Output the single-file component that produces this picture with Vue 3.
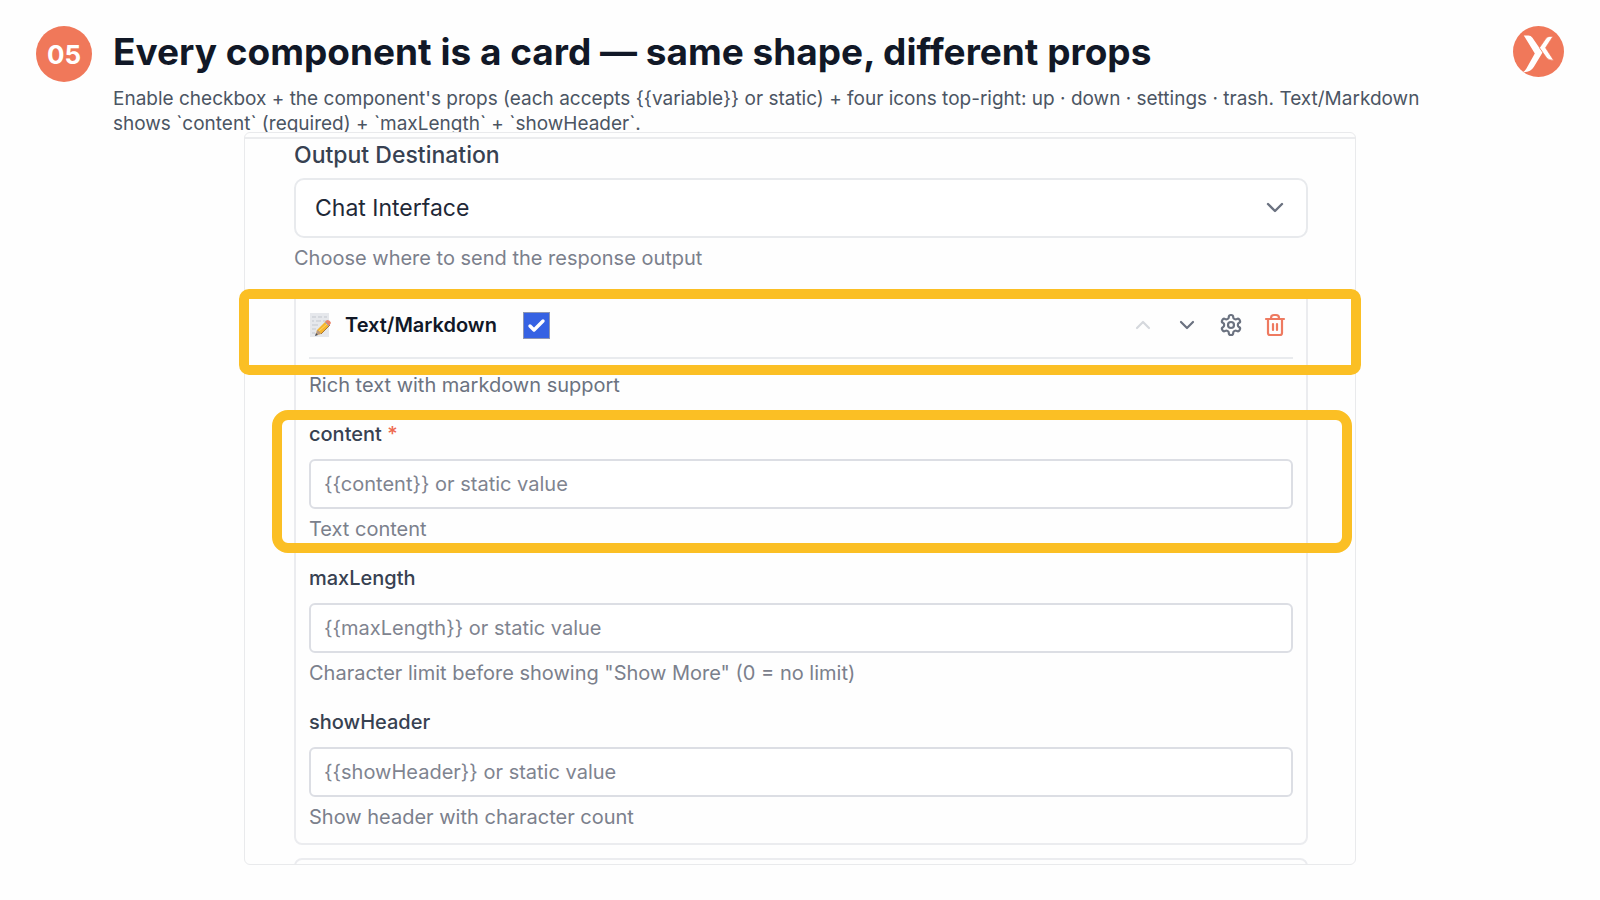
<script setup>
import { ref } from 'vue'

const destination = ref('chat')
const enabled = ref(true)

const subtitle =
  "Enable checkbox + the component's props (each accepts {{variable}} or static) + four icons top-right: up · down · settings · trash. Text/Markdown shows `content` (required) + `maxLength` + `showHeader`."

const fields = ref([
  { name: 'content', required: true, highlighted: true, hint: 'Text content', value: '' },
  { name: 'maxLength', hint: 'Character limit before showing "Show More" (0 = no limit)', value: '' },
  { name: 'showHeader', hint: 'Show header with character count', value: '' },
])

const placeholderFor = (name) => `{{${name}}} or static value`
</script>

<template>
  <main class="slide">
    <header class="slide-header">
      <span class="step">05</span>
      <div class="heading">
        <h1 class="title">Every component is a card — same shape, different props</h1>
        <p class="subtitle">{{ subtitle }}</p>
      </div>
      <svg class="logo" viewBox="0 0 152 152" aria-hidden="true">
        <circle cx="76" cy="76" r="76" fill="#f0785a" />
        <path d="M32 28 H46 Q53 28 58 35 L88 79 L62 122 Q53 137 29 138 Q36 134 40 127 L65 82 Z" fill="#fff" />
        <path d="M119 31 H110 Q103 31 99 36 L79 65 L101 96 Q106 102 121 102 L97 65 Z" fill="#fff" stroke="#f0785a" stroke-width="2" />
      </svg>
    </header>

    <section class="panel">
      <div class="panel-body">
        <div class="destination">
          <label class="destination-label" for="destination">Output Destination</label>
          <div class="select-wrap">
            <select id="destination" v-model="destination" class="select">
              <option value="chat">Chat Interface</option>
            </select>
            <svg class="select-arrow" viewBox="0 0 20 12" aria-hidden="true">
              <path d="M3 2 L10 9 L17 2" />
            </svg>
          </div>
          <p class="hint">Choose where to send the response output</p>
        </div>

        <article class="card">
          <div class="card-header">
            <svg class="memo" viewBox="0 0 22 24" aria-hidden="true">
              <rect x="1" y="0" width="19" height="24" fill="#e6e8ec" />
              <path
                d="M3 4H7M9 4H13M15 4H18M3 8H5M7 8H12M14 8H18M3 12H9M3 16H7M3 20H6"
                stroke="#c3c7ce"
                stroke-width="1"
                fill="none"
              />
              <path d="M7 22 L8 17 L17 8 L21 12 L12 21 Z" fill="#f5b52e" />
              <path d="M9 19 L19 10" stroke="#ffd76a" stroke-width="1" />
              <path d="M12 21 L21 12" stroke="#a97434" stroke-width="1" />
              <path d="M7 22 L8 17 Q11 18 12 21 Z" fill="#b99b83" />
              <path d="M6 23 L7 20 L9 22 Z" fill="#4b4f58" />
              <path d="M16 9 L18 7 Q21 7 22 10 L20 13 Z" fill="#e98368" />
              <path d="M16 9 L20 13" stroke="#9aa5b5" stroke-width="1" />
            </svg>
            <label class="card-title" for="enabled">Text/Markdown</label>
            <span class="check">
              <input id="enabled" v-model="enabled" type="checkbox" class="check-input" />
              <svg v-if="enabled" class="check-mark" viewBox="0 0 27 27" aria-hidden="true">
                <path d="M7 14 L11 18 L20 9" />
              </svg>
            </span>
            <div class="actions">
              <button type="button" class="icon-btn" aria-label="Move up" disabled>
                <svg viewBox="0 0 24 24"><path d="M6 15 L12 9 L18 15" /></svg>
              </button>
              <button type="button" class="icon-btn" aria-label="Move down">
                <svg viewBox="0 0 24 24"><path d="M6 9 L12 15 L18 9" /></svg>
              </button>
              <button type="button" class="icon-btn" aria-label="Settings">
                <svg viewBox="0 0 24 24">
                  <path
                    d="M12.22 2h-.44a2 2 0 0 0-2 2v.18a2 2 0 0 1-1 1.73l-.43.25a2 2 0 0 1-2 0l-.15-.08a2 2 0 0 0-2.73.73l-.22.38a2 2 0 0 0 .73 2.73l.15.1a2 2 0 0 1 1 1.72v.51a2 2 0 0 1-1 1.74l-.15.09a2 2 0 0 0-.73 2.73l.22.38a2 2 0 0 0 2.73.73l.15-.08a2 2 0 0 1 2 0l.43.25a2 2 0 0 1 1 1.73V20a2 2 0 0 0 2 2h.44a2 2 0 0 0 2-2v-.18a2 2 0 0 1 1-1.73l.43-.25a2 2 0 0 1 2 0l.15.08a2 2 0 0 0 2.73-.73l.22-.39a2 2 0 0 0-.73-2.73l-.15-.08a2 2 0 0 1-1-1.74v-.5a2 2 0 0 1 1-1.74l.15-.09a2 2 0 0 0 .73-2.73l-.22-.38a2 2 0 0 0-2.73-.73l-.15.08a2 2 0 0 1-2 0l-.43-.25a2 2 0 0 1-1-1.73V4a2 2 0 0 0-2-2z"
                  />
                  <circle cx="12" cy="12" r="3" />
                </svg>
              </button>
              <button type="button" class="icon-btn danger" aria-label="Delete">
                <svg viewBox="0 0 24 24">
                  <path d="M3 6H21M5 6V20A2 2 0 0 0 7 22H17A2 2 0 0 0 19 20V6M8 6V5A3 3 0 0 1 11 2H13A3 3 0 0 1 16 5V6M10 11V17M14 11V17" />
                </svg>
              </button>
            </div>
            <div class="highlight highlight-header"></div>
          </div>

          <p class="description">Rich text with markdown support</p>

          <div v-for="field in fields" :key="field.name" class="field">
            <label class="field-label" :for="field.name">
              {{ field.name }} <span v-if="field.required" class="required">*</span>
            </label>
            <input
              :id="field.name"
              v-model="field.value"
              type="text"
              class="field-input"
              :placeholder="placeholderFor(field.name)"
            />
            <p class="hint">{{ field.hint }}</p>
            <div v-if="field.highlighted" class="highlight highlight-field"></div>
          </div>
        </article>

        <!-- top edge of the next card -->
        <div class="next-card"><div class="next-card-edge"></div></div>
      </div>
    </section>
  </main>
</template>

<style>
body {
  background: #fefefe;
}
</style>

<style scoped>
.slide {
  font-family: Inter, "Liberation Sans", sans-serif;
  color: #111827;
  padding-bottom: 34px;
}

.slide * {
  box-sizing: border-box;
}

.slide-header {
  display: flex;
  align-items: flex-start;
  padding: 26px 36px 0;
}

.step {
  display: flex;
  align-items: center;
  justify-content: center;
  flex: none;
  width: 56px;
  height: 56px;
  margin-right: 21px;
  border-radius: 50%;
  background: #f0785a;
  color: #fff;
  font-size: 26px;
  font-weight: 700;
}

.heading {
  flex: 1;
  min-width: 0;
}

.title {
  margin: 0;
  font-size: 37px;
  font-weight: 700;
  line-height: 52px;
}

.subtitle {
  margin: 8px 60px 0 0;
  color: #4b5563;
  font-size: 19px;
  line-height: 25px;
}

.logo {
  flex: none;
  width: 51px;
  height: 51px;
}

.panel {
  position: relative;
  width: 70%;
  max-width: 1112px;
  margin: -4px auto 0;
  padding-top: 4px;
  border: 1px solid #e9eaec;
  border-radius: 6px;
  background: #fefefe;
}

.panel-body {
  padding: 2px 47px 0 49px;
  border-top: 2px solid #ebecee;
}

.destination-label {
  display: block;
  margin-bottom: 9px;
  color: #374151;
  font-size: 23px;
  font-weight: 500;
  line-height: 28px;
}

.select-wrap {
  position: relative;
}

.select {
  display: block;
  width: 100%;
  height: 60px;
  padding: 0 48px 0 19px;
  border: 2px solid #e8eaed;
  border-radius: 10px;
  background: #fff;
  color: #1f2937;
  font-family: inherit;
  font-size: 23px;
  appearance: none;
}

.select-arrow {
  position: absolute;
  top: 24px;
  right: 23px;
  width: 20px;
  height: 12px;
  fill: none;
  stroke: #6b7280;
  stroke-width: 2.4;
  stroke-linecap: round;
  stroke-linejoin: round;
  pointer-events: none;
}

.hint {
  margin: 8px 0 0;
  color: #7b808c;
  font-size: 20px;
  line-height: 24px;
}

.card {
  margin-top: 21px;
  padding: 0 13px 14px;
  border: 2px solid #ebecef;
  border-radius: 8px;
}

.card-header {
  position: relative;
  display: flex;
  align-items: center;
  height: 66px;
  border-bottom: 2px solid #e9ebee;
}

.memo {
  width: 22px;
  height: 24px;
}

.card-title {
  margin: 0 26px 0 14px;
  font-size: 20px;
  font-weight: 600;
}

.check {
  position: relative;
  width: 27px;
  height: 27px;
}

.check-input {
  display: block;
  width: 100%;
  height: 100%;
  margin: 0;
  border: 1px solid #8d96b4;
  background: #fff;
  appearance: none;
}

.check-input:checked {
  background: #3662e3;
}

.check-mark {
  position: absolute;
  inset: 0;
  fill: none;
  stroke: #fff;
  stroke-width: 3.4;
  stroke-linecap: round;
  stroke-linejoin: round;
  pointer-events: none;
}

.actions {
  display: flex;
  gap: 8px;
  margin-left: auto;
}

.icon-btn {
  display: flex;
  align-items: center;
  justify-content: center;
  width: 36px;
  height: 36px;
  padding: 0;
  border: none;
  background: none;
  color: #6b7280;
  cursor: pointer;
}

.icon-btn svg {
  width: 24px;
  height: 24px;
  fill: none;
  stroke: currentColor;
  stroke-width: 2.2;
  stroke-linecap: round;
  stroke-linejoin: round;
}

.icon-btn:disabled {
  color: #d5d8dd;
  cursor: default;
}

.icon-btn.danger {
  color: #ee7a60;
}

.description {
  margin: 14px 0 0;
  color: #6b7280;
  font-size: 20px;
  line-height: 24px;
}

.field {
  position: relative;
  margin-top: 25px;
}

.field-label {
  display: block;
  margin-bottom: 13px;
  color: #374151;
  font-size: 20px;
  font-weight: 500;
  line-height: 24px;
}

.required {
  color: #ee6a4f;
}

.field-input {
  display: block;
  width: 100%;
  height: 50px;
  padding: 0 13px;
  border: 2px solid #dcdee4;
  border-radius: 6px;
  background: #fff;
  color: #1f2937;
  font-family: inherit;
  font-size: 20px;
}

.field-input::placeholder {
  color: #7f8490;
  opacity: 1;
}

/* callout frames over the form */
.highlight {
  position: absolute;
  border: 10px solid #fbbf24;
  pointer-events: none;
}

.highlight-header {
  inset: -4px -68px -18px -70px;
  border-radius: 10px;
}

.highlight-field {
  inset: -12px -59px -12px -37px;
  border-radius: 16px;
}

.next-card {
  height: 6px;
  margin-top: 13px;
  overflow: hidden;
}

.next-card-edge {
  height: 20px;
  border: 2px solid #ebecef;
  border-radius: 8px;
}
</style>
